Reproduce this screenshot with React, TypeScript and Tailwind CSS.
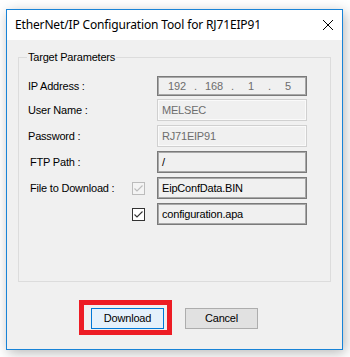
import React from "react";

const ui = { fontFamily: '"Liberation Sans", Arial, sans-serif' };
const title = { fontFamily: '"Noto Sans", "Liberation Sans", sans-serif' };

function CheckBox({ disabled }: { disabled?: boolean }) {
  return (
    <span
      className={
        "flex h-[13px] w-[13px] items-center justify-center border " +
        (disabled ? "border-[#bcbcbc] bg-[#f4f4f4]" : "border-[#333333] bg-white")
      }
    >
      <svg width="11" height="11" viewBox="0 0 11 11">
        <path
          d="M1.5 5.5 L4 8 L9.5 2.5"
          fill="none"
          stroke={disabled ? "#bcbcbc" : "#333333"}
          strokeWidth="1.1"
        />
      </svg>
    </span>
  );
}

function TextBox({ value, disabled }: { value: string; disabled?: boolean }) {
  return (
    <div
      className={
        "flex h-[22px] w-[150px] items-center pl-[4px] " +
        (disabled
          ? "border border-[#d0d0d0] text-[#6d6d6d] shadow-[inset_0_0_0_1px_#fafafa]"
          : "border border-[#7a7a7a] text-black shadow-[inset_0_0_0_1px_#a8a8a8]")
      }
    >
      {value}
    </div>
  );
}

function Row({
  label,
  indent,
  check,
  children,
  className = "",
}: {
  label?: string;
  indent?: boolean;
  check?: React.ReactNode;
  children: React.ReactNode;
  className?: string;
}) {
  return (
    <div className={"grid grid-cols-[104px_25px_150px] items-center " + className}>
      <span className={indent ? "pl-[2px]" : ""}>{label}</span>
      <span className="flex items-center">{check}</span>
      {children}
    </div>
  );
}

export default function App() {
  const ip = ["192", "168", "1", "5"];
  return (
    <div className="h-[357px] w-[350px] overflow-hidden bg-white text-[11px] tracking-[-0.2px] text-black" style={ui}>
      <div className="ml-[6px] mt-[9px] flex h-[341px] w-[337px] flex-col border border-[#1883d7] shadow-[2px_3px_12px_rgba(0,0,0,0.28)]">
        {/* title bar */}
        <div className="flex h-[30px] items-center justify-between bg-white pl-[8px] pr-[9px]">
          <span className="text-[12px] tracking-[-0.15px]" style={title}>
            EtherNet/IP Configuration Tool for RJ71EIP91
          </span>
          <svg width="10" height="10" viewBox="0 0 10 10">
            <path d="M0 0 L10 10 M10 0 L0 10" stroke="#000" strokeWidth="1" />
          </svg>
        </div>

        <div className="flex-1 bg-[#f0f0f0] px-[11px]">
          {/* group box */}
          <div className="relative mt-[17px] h-[225px] border border-[#dcdcdc] pl-[9px] pt-[18px]">
            <span className="absolute -top-[8px] left-[8px] bg-[#f0f0f0] px-[1px] leading-[14px]">
              Target Parameters
            </span>

            <Row label="IP Address :">
              <div className="grid h-[20px] w-[150px] grid-cols-[34px_3px_34px_3px_34px_3px_34px] items-center border border-[#7a7a7a] pl-[2px] text-center text-[#6d6d6d] shadow-[inset_0_0_0_1px_#a8a8a8]">
                {ip.map((part, i) => (
                  <React.Fragment key={i}>
                    <span>{part}</span>
                    {i < 3 ? <span>.</span> : null}
                  </React.Fragment>
                ))}
              </div>
            </Row>
            <Row label="User Name :" className="mt-[3px]">
              <TextBox value="MELSEC" disabled />
            </Row>
            <Row label="Password :" className="mt-[4px]">
              <TextBox value="RJ71EIP91" disabled />
            </Row>
            <Row label="FTP Path :" indent className="mt-[4px]">
              <TextBox value="/" />
            </Row>
            <Row label="File to Download :" indent check={<CheckBox disabled />} className="mt-[4px]">
              <TextBox value="EipConfData.BIN" />
            </Row>
            <Row check={<CheckBox />} className="mt-[4px]">
              <TextBox value="configuration.apa" />
            </Row>
          </div>

          {/* buttons */}
          <div className="mt-[18px] flex items-start">
            <div className="ml-[61px] border-[5px] border-[#ed1c24] pb-[1px] pl-[7px] pr-[3px] pt-[3px]">
              <button className="flex h-[21px] w-[73px] items-center justify-center border border-[#0078d7] bg-[#e5f1fb]">
                Download
              </button>
            </div>
            <button className="ml-[13px] mt-[8px] flex h-[21px] w-[73px] items-center justify-center border border-[#adadad] bg-[#e1e1e1]">
              Cancel
            </button>
          </div>
        </div>
      </div>
    </div>
  );
}
